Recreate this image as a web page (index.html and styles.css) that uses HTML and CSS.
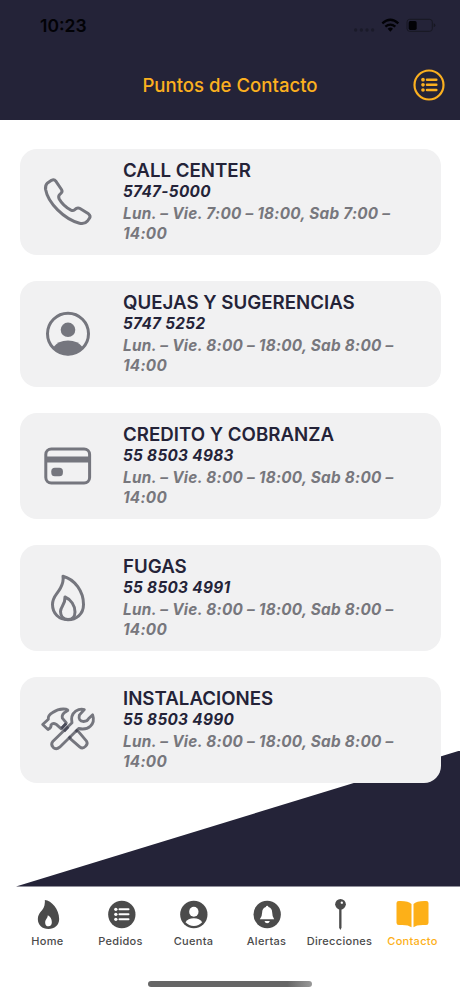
FILE: index.html
```html
<!DOCTYPE html>
<html lang="es">
<head>
    <meta charset="UTF-8">
    <meta name="viewport" content="width=device-width, initial-scale=1.0">
    <title>Puntos de Contacto</title>
    <link rel="stylesheet" href="styles.css">
</head>
<body>

    <header class="header">
        <div class="status-bar">
            <span class="time">10:23</span>
            <svg class="status-icons" viewBox="370 45 252 60">
                <g fill="#1a1a29">
                    <circle cx="378" cy="90" r="5"/><circle cx="395" cy="90" r="5"/>
                    <circle cx="412" cy="90" r="5"/><circle cx="429" cy="90" r="5"/>
                </g>
                <g fill="none" stroke="#020206" stroke-width="7">
                    <path d="M458 70Q482 49 506 70"/>
                    <path d="M467 80Q482 68 497 80"/>
                </g>
                <path d="M474 86Q482 79 490 86L482 95Z" fill="#020206"/>
                <rect x="532" y="58" width="76" height="36" rx="8" fill="none" stroke="#171722" stroke-width="3"/>
                <rect x="537" y="63" width="24" height="27" rx="5" fill="#020206"/>
                <path d="M612 70q5 1 5 6t-5 6z" fill="#171722"/>
            </svg>
        </div>
        <div class="title-bar">
            <h1>Puntos de Contacto</h1>
            <svg class="menu-icon" viewBox="547 207 96 96">
                <circle cx="595" cy="255" r="43.500" fill="none" stroke="#fbb01f" stroke-width="6.500"/>
                <g fill="#fbb01f">
                    <circle cx="577" cy="239" r="5.500"/><circle cx="577" cy="254.500" r="5.500"/><circle cx="577" cy="270" r="5.500"/>
                </g>
                <path d="M589 239H617M589 254.500H617M589 270H617" stroke="#fbb01f" stroke-width="7.500" stroke-linecap="round"/>
            </svg>
        </div>
    </header>

    <main class="contacts">
        <div class="card">
            <svg class="card-icon" viewBox="0 0 60 60">
                <path d="M9.200 11.200L13.500 8.300Q16.200 7 17.800 9.200L23.500 17.500Q24.800 19.500 23 21.300L21.500 22.800Q20 24.500 21.200 27C24 32 28.500 35.800 33 38.100Q35 39 36.500 37.800L38.200 36.500Q40 35.300 42 36.500L50.500 41.800Q53 43.800 51.500 46.200L49.500 49Q46.500 52.500 41.500 51.200C26 47 10 31 7.600 17.500Q7 13.500 9.200 11.200Z"/>
            </svg>
            <div class="card-text">
                <h2>CALL CENTER</h2>
                <p class="phone">5747-5000</p>
                <p class="hours">Lun. – Vie. 7:00 – 18:00, Sab 7:00 – 14:00</p>
            </div>
        </div>

        <div class="card">
            <svg class="card-icon" viewBox="0 0 60 60">
                <circle cx="30" cy="29.800" r="20.500"/>
                <circle class="solid" cx="30" cy="25.800" r="7.300"/>
                <path class="solid" d="M15 43.500Q20 36.500 30 36.500T45 43.500Q39 51.200 30 51.200T15 43.500Z"/>
            </svg>
            <div class="card-text">
                <h2>QUEJAS Y SUGERENCIAS</h2>
                <p class="phone">5747 5252</p>
                <p class="hours">Lun. – Vie. 8:00 – 18:00, Sab 8:00 – 14:00</p>
            </div>
        </div>

        <div class="card">
            <svg class="card-icon" viewBox="0 0 60 60">
                <rect x="7.800" y="12.900" width="43.800" height="34.100" rx="5.500"/>
                <rect class="solid" x="7" y="20.500" width="45.500" height="6"/>
                <rect class="solid" x="13.300" y="31.800" width="11.600" height="8.400" rx="3.500"/>
            </svg>
            <div class="card-text">
                <h2>CREDITO Y COBRANZA</h2>
                <p class="phone">55 8503 4983</p>
                <p class="hours">Lun. – Vie. 8:00 – 18:00, Sab 8:00 – 14:00</p>
            </div>
        </div>

        <div class="card">
            <svg class="card-icon" viewBox="0 0 60 60">
                <path d="M25 8.300C37 11.500 45.500 23.500 45.500 36.500C45.500 46.500 38 51.700 30 51.700C21 51.700 14.500 45.500 14.500 36.500C14.500 28.500 19 26.500 22.500 20C25 15.500 25.500 11.500 25 8.300Z"/>
                <path d="M27 29C33 31.500 37 37.500 37 44C37 48.500 34 51.500 30 51.500C25.500 51.500 22.500 48.500 22.500 43.500C22.500 38.500 27.500 36.500 27 29Z"/>
            </svg>
            <div class="card-text">
                <h2>FUGAS</h2>
                <p class="phone">55 8503 4991</p>
                <p class="hours">Lun. – Vie. 8:00 – 18:00, Sab 8:00 – 14:00</p>
            </div>
        </div>

        <div class="card">
            <svg class="card-icon tools" viewBox="6 -1.500 180 180">
                <path d="M20 72L37 56Q35 45 50 36Q68 23 90 26Q101 29 91 33Q76 40 79 53L91 67L76 85L60 71Q51 66 45 73Q47 81 36 87Z"/>
                <path d="M123 88L151 121Q157 130 149 137Q140 147 131 139L100 112"/>
                <path d="M51 122L108 67Q103 44 119 32Q132 23 145 27L130 44Q126 62 143 63Q154 63 158 54L170 43Q177 64 163 77Q150 89 128 84L71 140Q60 149 51 140Q43 131 51 122Z"/>
                <path class="dark" d="M76 84L91 69M84 92L97 79M98 108L104 114M119 88L125 94"/>
            </svg>
            <div class="card-text">
                <h2>INSTALACIONES</h2>
                <p class="phone">55 8503 4990</p>
                <p class="hours">Lun. – Vie. 8:00 – 18:00, Sab 8:00 – 14:00</p>
            </div>
        </div>
    </main>

    <footer class="footer">
        <nav class="tabs">
            <a class="tab">
                <svg viewBox="88.500 66 108 108">
                    <path fill-rule="evenodd" d="M133 75C153 77 176 102 176 132C176 151 162 162 144 162C125 162 112 150 112 132C112 113 128 108 132 91Q134 82 133 75ZM142 121C141 132 134 133 134 143C134 150 138 154 144 154C150 154 154 150 154 142C154 132 150 125 142 121Z"/>
                </svg>
                <span>Home</span>
            </a>
            <a class="tab">
                <svg viewBox="307.500 66 108 108">
                    <circle cx="364" cy="118.500" r="41"/>
                    <g fill="#fff"><circle cx="346" cy="103" r="5"/><circle cx="346" cy="118" r="5"/><circle cx="346" cy="133" r="5"/></g>
                    <path d="M357 103H384M357 118H384M357 133H384" stroke="#fff" stroke-width="6" stroke-linecap="round"/>
                </svg>
                <span>Pedidos</span>
            </a>
            <a class="tab">
                <svg viewBox="526.500 66 108 108">
                    <circle cx="580" cy="118.500" r="41"/>
                    <ellipse cx="580" cy="110" rx="14" ry="15" fill="#fff"/>
                    <path d="M555 142Q562 130 580 130T605 142Q595 153 580 153T555 142Z" fill="#fff"/>
                </svg>
                <span>Cuenta</span>
            </a>
            <a class="tab">
                <svg viewBox="55.500 66 108 108">
                    <circle cx="110" cy="118.500" r="41"/>
                    <path d="M110 92Q113 92 114 96Q125 100 125 112Q125 125 131 133H88Q95 125 95 112Q95 100 106 96Q107 92 110 92ZM102 138H118Q116 145 110 145T102 138Z" fill="#fff"/>
                </svg>
                <span>Alertas</span>
            </a>
            <a class="tab">
                <svg viewBox="274.500 66 108 108">
                    <circle cx="330" cy="88" r="16"/>
                    <circle cx="334" cy="83" r="3.500" fill="#fff"/>
                    <path d="M326 101H333V158L329.500 165L326 158Z"/>
                </svg>
                <span>Direcciones</span>
            </a>
            <a class="tab active">
                <svg viewBox="493.500 66 108 108">
                    <path d="M543 157Q533 148 505 150Q498 150 498 143V84Q498 78 505 78Q534 77 543 87ZM549 157Q558 148 587 150Q594 150 594 143V84Q594 78 587 78Q558 77 549 87Z"/>
                </svg>
                <span>Contacto</span>
            </a>
        </nav>
        <div class="home-indicator"></div>
    </footer>

</body>
</html>
```
FILE: styles.css
```css
* {
    box-sizing: border-box;
}

body {
    display: flex;
    flex-direction: column;
    height: 996px;
    margin: 0;
    overflow: hidden;
    background: #fff;
    color: #242338;
    font-family: Inter, sans-serif;
}

h1, h2, p {
    margin: 0;
}

svg {
    display: block;
    flex: none;
}

.header {
    height: 120px;
    background: #242338;
}

.status-bar {
    display: flex;
    align-items: center;
    justify-content: space-between;
    height: 50px;
    padding: 0 22.700px 0 40px;
}

.time {
    padding-top: 2px;
    color: #020206;
    font-size: 17.500px;
    font-weight: 600;
    line-height: 50px;
}

.status-icons {
    width: 84px;
    height: 20px;
}

.title-bar {
    display: flex;
    align-items: center;
    height: 70px;
    padding: 0 15.500px 0 47.500px;
}

.title-bar h1 {
    flex: 1;
    color: #fbb01f;
    font-size: 18.600px;
    font-weight: 550;
    line-height: 22px;
    text-align: center;
}

.menu-icon {
    width: 32px;
    height: 32px;
}

.contacts {
    position: relative;
    display: flex;
    flex-direction: column;
    gap: 26px;
    height: 766.500px;
    padding: 28.500px 19.500px 0 19.500px;
}

/* diagonal shape behind the cards */
.contacts::before {
    content: "";
    position: absolute;
    z-index: -1;
    right: 0;
    bottom: 0;
    width: 444px;
    height: 136px;
    background: #242338;
    clip-path: polygon(0 100%, 100% 0, 100% 100%);
}

.card {
    display: flex;
    align-items: center;
    height: 106px;
    padding-left: 18.500px;
    border-radius: 17px;
    background: #f1f1f2;
}

.card-icon {
    width: 60px;
    height: 60px;
    fill: none;
    stroke: #75767e;
    stroke-width: 3;
    stroke-linejoin: round;
}

.card-icon .solid {
    fill: #75767e;
    stroke: none;
}

.tools {
    stroke-width: 8.500;
}

.tools .dark {
    stroke: #4b4c5a;
}

.card-text {
    width: 290px;
    margin-left: 25px;
    padding-top: 1px;
}

.card-text h2 {
    font-size: 18.700px;
    font-weight: 600;
    line-height: 22px;
}

.phone {
    font-size: 15.300px;
    font-style: italic;
    font-weight: 700;
    letter-spacing: 0.320px;
    line-height: 20px;
}

.hours {
    margin-top: 2px;
    color: #77777d;
    font-size: 15.300px;
    font-style: italic;
    font-weight: 650;
    letter-spacing: 0.270px;
    line-height: 20px;
}

.footer {
    flex: 1;
    background: #fff;
}

.tabs {
    display: flex;
    padding: 10px 11px 0 11px;
}

.tab {
    display: flex;
    flex: 1 1 0;
    flex-direction: column;
    align-items: center;
    min-width: 0;
    color: #4b4b4b;
    font-size: 11px;
    font-weight: 450;
    letter-spacing: 0.300px;
    line-height: 14px;
}

.tab svg {
    width: 36px;
    height: 36px;
    fill: currentColor;
}

.tab span {
    margin-top: 1px;
}

.tab.active {
    color: #fdb018;
}

.home-indicator {
    width: 164px;
    height: 6px;
    margin: 33px auto 0 auto;
    border-radius: 3px;
    background: linear-gradient(to right, #666 85%, #999);
}
```
